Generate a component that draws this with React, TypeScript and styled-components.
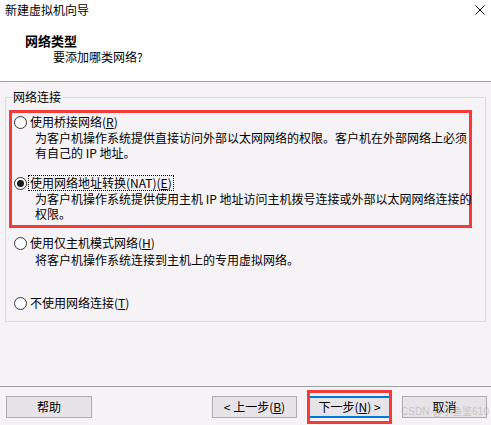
import styled, { createGlobalStyle } from 'styled-components';

const GlobalStyle = createGlobalStyle`
  html, body {
    margin: 0;
    padding: 0;
  }
  body {
    background: #f6f3f7;
    font-family: "Noto Sans CJK SC", "Microsoft YaHei", sans-serif;
    font-size: 12px;
    color: #000;
  }
  * {
    box-sizing: border-box;
  }
`;

const Window = styled.div`
  position: relative;
  width: 491px;
  height: 425px;
  display: flex;
  flex-direction: column;
  background: #f6f3f7;
  overflow: hidden;
`;

const Header = styled.div`
  height: 82px;
  background: #fff;
  border-bottom: 1px solid #a0a0a0;
  display: flex;
  flex-direction: column;
`;

const TitleBar = styled.div`
  display: flex;
  justify-content: space-between;
  align-items: center;
  height: 14px;
  line-height: 14px;
  margin-top: 3px;
  padding: 0 6px 0 5px;
`;

const Heading = styled.div`
  margin-top: 16px;
  padding-left: 25px;
  font-size: 13px;
  font-weight: 700;
  line-height: 16px;
`;

const SubHeading = styled.div`
  margin-top: 1px;
  padding-left: 53px;
  line-height: 14px;
`;

const Group = styled.fieldset`
  margin: 8px 5px 0 5px;
  border: 1px solid #dcdadd;
  padding: 0 0 10px 0;
  min-width: 0;
`;

const Legend = styled.legend`
  margin-left: 6px;
  padding: 0 1px;
  line-height: 14px;
  font-size: 12px;
`;

const RedFrame = styled.div`
  margin: 6px 13px 0 3px;
  border: 3px solid #f33b3b;
  padding: 1px 0 4px 0;
`;

const OptionBlock = styled.div<{ $gap: number; $indent: number }>`
  margin-top: ${(p) => p.$gap}px;
  --indent: ${(p) => p.$indent}px;
`;

const Row = styled.div`
  display: flex;
  align-items: center;
  height: 16px;
  padding-left: var(--indent);
  white-space: nowrap;
`;

const Radio = styled.span<{ $checked?: boolean }>`
  width: 13px;
  height: 13px;
  border-radius: 50%;
  border: 1px solid #333;
  background: #fff;
  margin-right: 2px;
  display: flex;
  align-items: center;
  justify-content: center;
  flex-shrink: 0;
  &::after {
    content: '';
    display: ${(p) => (p.$checked ? 'block' : 'none')};
    width: 7px;
    height: 7px;
    border-radius: 50%;
    background: #1a1a1a;
  }
`;

const Label = styled.span<{ $focused?: boolean }>`
  line-height: 14px;
  padding: 0 1px;
  outline: ${(p) => (p.$focused ? '1px dotted #000' : 'none')};
`;

const Desc = styled.div<{ $top: number }>`
  margin-top: ${(p) => p.$top}px;
  padding-left: calc(var(--indent) + 21px);
  line-height: 15px;
  white-space: nowrap;
`;

const Footer = styled.div`
  margin-top: auto;
  height: 39px;
  border-top: 1px solid #a0a0a0;
  padding: 9px 4px 0 6px;
  display: flex;
  align-items: flex-start;
`;

const Button = styled.button<{ $width?: number }>`
  width: ${(p) => p.$width ?? 85}px;
  height: 22px;
  padding: 0;
  border: 1px solid #adadad;
  background: #e6e4e8;
  font-family: inherit;
  font-size: 12px;
  color: #000;
  line-height: 20px;
`;

const NavGroup = styled.div`
  margin-left: auto;
  display: flex;
  gap: 10px;
`;

const NextFrame = styled.div`
  width: 85px;
  height: 34px;
  margin: -6px 0;
  border: 3px solid #f33b3b;
  padding: 3px 0;
`;

const NextButton = styled(Button)`
  width: 100%;
  border: none;
  border-top: 2px solid #0078d7;
  border-bottom: 2px solid #0078d7;
  line-height: 18px;
`;

const Watermark = styled.div`
  position: absolute;
  right: 2px;
  bottom: 7px;
  font-family: "Liberation Sans", "Noto Sans CJK SC", sans-serif;
  font-size: 10px;
  color: rgba(150, 150, 150, 0.45);
  pointer-events: none;
`;

type OptionProps = {
  label: React.ReactNode;
  lines?: string[];
  checked?: boolean;
  focused?: boolean;
  gap: number;
  indent: number;
  descTop?: number;
};

const Option = ({ label, lines = [], checked, focused, gap, indent, descTop = 0 }: OptionProps) => (
  <OptionBlock $gap={gap} $indent={indent}>
    <Row>
      <Radio $checked={checked} />
      <Label $focused={focused}>{label}</Label>
    </Row>
    {lines.length > 0 && (
      <Desc $top={descTop}>
        {lines.map((l, i) => (
          <div key={i}>{l}</div>
        ))}
      </Desc>
    )}
  </OptionBlock>
);

const CloseIcon = () => (
  <svg width="10" height="10" viewBox="0 0 10 10">
    <path d="M0.5 0.5 L9.5 9.5 M9.5 0.5 L0.5 9.5" stroke="#000" strokeWidth="1" fill="none" />
  </svg>
);

export default function App() {
  return (
    <Window>
      <GlobalStyle />
      <Header>
        <TitleBar>
          <span>新建虚拟机向导</span>
          <CloseIcon />
        </TitleBar>
        <Heading>网络类型</Heading>
        <SubHeading>要添加哪类网络?</SubHeading>
      </Header>

      <Group>
        <Legend>网络连接</Legend>
        <RedFrame>
          <Option
            gap={0}
            indent={2}
            label={<>使用桥接网络(<u>R</u>)</>}
            lines={[
              '为客户机操作系统提供直接访问外部以太网网络的权限。客户机在外部网络上必须',
              '有自己的 IP 地址。',
            ]}
          />
          <Option
            gap={15}
            indent={2}
            checked
            focused
            label={<>使用网络地址转换(NAT)(<u>E</u>)</>}
            lines={[
              '为客户机操作系统提供使用主机 IP 地址访问主机拨号连接或外部以太网网络连接的',
              '权限。',
            ]}
          />
        </RedFrame>
        <Option
          gap={7}
          indent={8}
          descTop={1}
          label={<>使用仅主机模式网络(<u>H</u>)</>}
          lines={['将客户机操作系统连接到主机上的专用虚拟网络。']}
        />
        <Option gap={28} indent={8} label={<>不使用网络连接(<u>T</u>)</>} />
      </Group>

      <Footer>
        <Button $width={86}>帮助</Button>
        <NavGroup>
          <Button>&lt; 上一步(<u>B</u>)</Button>
          <NextFrame>
            <NextButton>下一步(<u>N</u>) &gt;</NextButton>
          </NextFrame>
          <Button>取消</Button>
        </NavGroup>
      </Footer>
      <Watermark>CSDN @小鱼鉴610</Watermark>
    </Window>
  );
}
